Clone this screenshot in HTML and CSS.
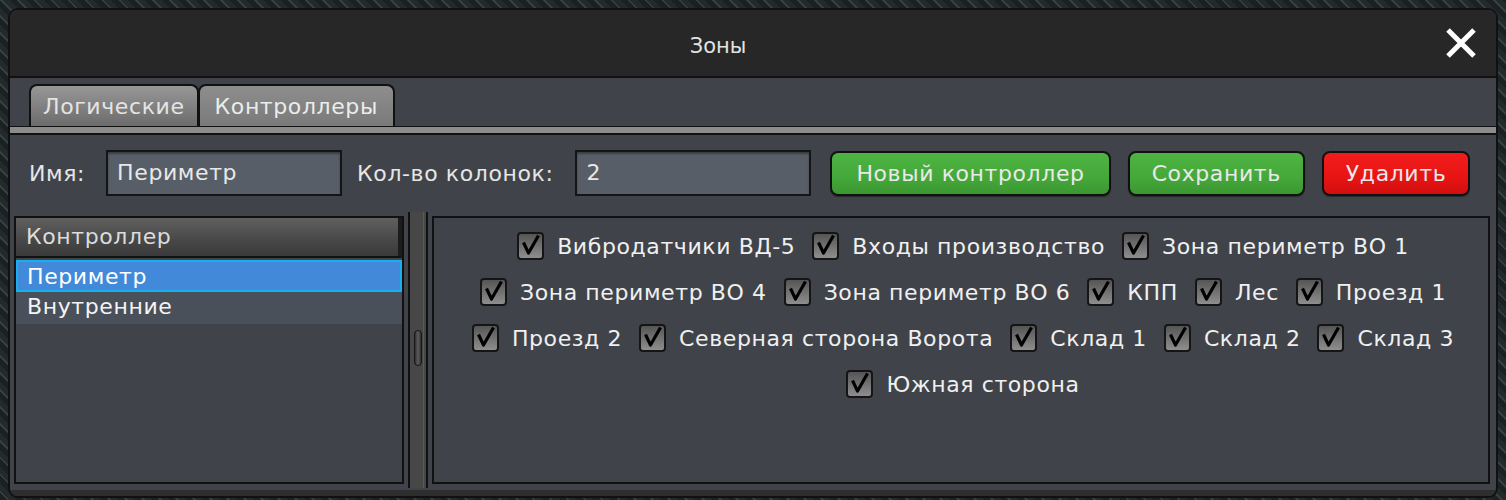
FILE: index.html
```html
<!DOCTYPE html>
<html lang="ru">

<head>
    <meta charset="UTF-8" />
    <meta name="viewport" content="width=device-width, initial-scale=1.0" />
    <title>Зоны</title>
    <link rel="stylesheet" href="styles.css">
</head>

<body>
    <div class="window">
        <div class="titlebar">
            <div class="title">Зоны</div>
            <div class="close">
                <svg width="32" height="32" viewBox="0 0 32 32">
                    <path d="M3 3 L29 29 M29 3 L3 29" stroke="#fff" stroke-width="5" />
                </svg>
            </div>
        </div>

        <div class="tabs">
            <div class="tab">Логические</div>
            <div class="tab active">Контроллеры</div>
        </div>
        <div class="tab-strip"></div>

        <div class="content">
            <div class="form-row">
                <span class="label">Имя:</span>
                <div class="input">Периметр</div>
                <span class="label label-cols">Кол-во колонок:</span>
                <div class="input">2</div>
                <button class="btn btn-green btn-first">Новый контроллер</button>
                <button class="btn btn-green">Сохранить</button>
                <button class="btn btn-red">Удалить</button>
            </div>

            <div class="panels">
                <div class="list">
                    <div class="list-header">Контроллер</div>
                    <div class="list-row selected">Периметр</div>
                    <div class="list-row">Внутренние</div>
                </div>

                <div class="splitter">
                    <div class="grip"></div>
                </div>

                <div class="zones" id="zones"></div>
            </div>
        </div>
        <div class="bottom-strip"></div>
    </div>

    <script>
        // строки как в исходном окне
        const zoneRows = [
            ["Вибродатчики ВД-5", "Входы производство", "Зона периметр ВО 1"],
            ["Зона периметр ВО 4", "Зона периметр ВО 6", "КПП", "Лес", "Проезд 1"],
            ["Проезд 2", "Северная сторона Ворота", "Склад 1", "Склад 2", "Склад 3"],
            ["Южная сторона"]
        ];

        const checkSvg = '<svg width="27" height="28" viewBox="0 0 27 28">' +
            '<path d="M6.5 10.5 L11.5 21 L21.5 3.5" fill="none" stroke="#000" stroke-width="3.2" stroke-linejoin="round" /></svg>';

        function renderZones() {
            const box = document.getElementById("zones");
            zoneRows.forEach(row => {
                const line = document.createElement("div");
                line.className = "zone-row";
                row.forEach(nome => {
                    const item = document.createElement("label");
                    item.className = "zone";
                    item.innerHTML = `<span class="check">${checkSvg}</span><span>${nome}</span>`;
                    line.appendChild(item);
                });
                box.appendChild(line);
            });
        }

        renderZones();
    </script>
</body>

</html>
```

FILE: styles.css
```css
:root {
    --cor-fundo: #40444a;
    --cor-titulo: #272727;
    --cor-borda: #111;
    --cor-texto: #e6e6e6;
}

body {
    font-family: 'DejaVu Sans', 'Liberation Sans', sans-serif;
    font-size: 22px;
    letter-spacing: 0.6px;
    margin: 0;
    color: var(--cor-texto);
    background-color: #1e2527;
    background-image: repeating-linear-gradient(45deg, #1b2123 0 5px, #33403f 5px 7px, #222a2c 7px 12px);
    height: 500px;
    overflow: hidden;
}

.window {
    margin: 8px;
    width: 1490px;
    height: 490px;
    box-sizing: border-box;
    border: 2px solid var(--cor-borda);
    border-radius: 10px;
    background-color: var(--cor-fundo);
    overflow: hidden;
    display: flex;
    flex-direction: column;
}

.titlebar {
    height: 66px;
    flex: none;
    background-color: var(--cor-titulo);
    border-bottom: 2px solid var(--cor-borda);
    display: flex;
    align-items: center;
}

.title {
    flex: 1;
    text-align: center;
    font-size: 21px;
    letter-spacing: 0;
    padding-top: 5px;
    color: #e2e2e2;
}

.close {
    width: 70px;
    display: flex;
    justify-content: center;
    align-items: center;
}

.tabs {
    height: 48px;
    flex: none;
    box-sizing: border-box;
    padding: 6px 0 0 19px;
    display: flex;
    align-items: flex-end;
}

.tab {
    height: 42px;
    box-sizing: border-box;
    padding: 8px 12px 0 12px;
    border: 2px solid var(--cor-borda);
    border-bottom: none;
    border-radius: 8px 8px 0 0;
    background: linear-gradient(#979797, #6c6c6c);
    color: #e4e4e4;
}

.tab + .tab {
    margin-left: -1px;
}

.tab.active {
    padding: 8px 15px 0 15px;
    background: linear-gradient(#8e8e8e, #7a7a7a);
    color: #ececec;
}

.tab-strip {
    height: 6px;
    flex: none;
    background-color: #8c8c8c;
    border-top: 1px solid var(--cor-borda);
    border-bottom: 2px solid var(--cor-borda);
}

.content {
    flex: 1;
    display: flex;
    flex-direction: column;
    padding: 15px 6px 6px 4px;
    min-height: 0;
}

.form-row {
    display: flex;
    align-items: center;
    height: 46px;
    padding-left: 15px;
    margin-bottom: 20px;
}

.label {
    margin-right: 21px;
}

.label-cols {
    margin-left: 15px;
    margin-right: 22px;
}

.input {
    width: 236px;
    height: 46px;
    box-sizing: border-box;
    padding-left: 9px;
    line-height: 42px;
    border: 2px solid #151515;
    background-color: #575e67;
    box-shadow: inset 0 2px 2px rgba(0, 0, 0, 0.35);
    color: #e8e8e8;
}

.btn {
    font-family: inherit;
    font-size: 22px;
    letter-spacing: 0.6px;
    height: 45px;
    margin-left: 17px;
    padding: 0 22px;
    border: 2px solid var(--cor-borda);
    border-radius: 8px;
    color: #e9e9e9;
    box-shadow: 0 1px 1px rgba(0, 0, 0, 0.4);
}

.btn-first {
    margin-left: 19px;
    padding: 0 24px;
}

.btn-green {
    background: linear-gradient(#4db442, #45a83a 60%, #3b9731);
}

.btn-red {
    background: linear-gradient(#f21c1c, #e81414 60%, #d10e0e);
}

.panels {
    flex: 1;
    display: flex;
    min-height: 0;
}

.list {
    width: 390px;
    box-sizing: border-box;
    border: 2px solid var(--cor-borda);
    background-color: var(--cor-fundo);
}

.list-header {
    height: 38px;
    line-height: 38px;
    padding-left: 10px;
    border-bottom: 2px solid var(--cor-borda);
    border-right: 4px solid #1c1c1c;
    background: linear-gradient(#606060, #474747 60%, #3a3a3a);
    color: #dcdcdc;
    margin-bottom: 2px;
}

.list-row {
    height: 32px;
    box-sizing: border-box;
    line-height: 30px;
    padding-left: 11px;
    background-color: #4a5059;
    color: #f4f4f4;
}

.list-row.selected {
    padding-left: 9px;
    border: 2px solid #16b0ee;
    background-color: #428ad9;
    color: #fff;
}

.splitter {
    width: 20px;
    box-sizing: border-box;
    margin: -4px 4px -4px 4px;
    border-left: 2px solid var(--cor-borda);
    border-right: 2px solid var(--cor-borda);
    background: linear-gradient(to right, #474747 0 13px, #5a5a5a 13px 14px, #474747 14px);
    display: flex;
    justify-content: center;
    padding-top: 118px;
}

.grip {
    width: 8px;
    height: 36px;
    box-sizing: border-box;
    border: 1px solid #151515;
    border-radius: 4px;
    background: linear-gradient(to right, #303030, #5c5c5c, #303030);
}

.zones {
    flex: 1;
    box-sizing: border-box;
    border: 2px solid var(--cor-borda);
    padding-top: 5px;
    background-color: var(--cor-fundo);
}

.zone-row {
    height: 46px;
    display: flex;
    justify-content: center;
    align-items: center;
    gap: 17px;
    padding-left: 4px;
}

.zone {
    display: flex;
    align-items: center;
    gap: 13px;
    color: #f0f0f0;
}

.check {
    width: 27px;
    height: 28px;
    box-sizing: border-box;
    border: 2px solid #151515;
    border-radius: 4px;
    background: linear-gradient(#555, #8e8e8e);
    display: flex;
    justify-content: center;
    align-items: center;
}

.check svg {
    flex: none;
}

.bottom-strip {
    height: 6px;
    flex: none;
    background-color: #2e2e2e;
}
```
